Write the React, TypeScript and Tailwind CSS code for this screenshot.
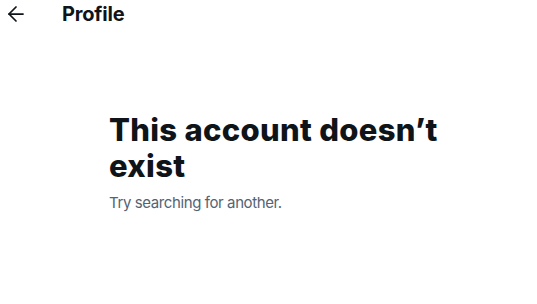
import { ArrowLeft } from "lucide-react";

export default function App() {
  return (
    <div className="w-[537px] h-[304px] bg-white text-[#0f1419] font-['Inter',sans-serif] overflow-hidden">
      <div className="h-[27px] flex items-center">
        <div className="w-[62px] pl-[4px] flex items-center">
          <ArrowLeft size={24} strokeWidth={1.75} />
        </div>
        <h2 className="text-[20px] font-bold leading-[24px] tracking-[-0.2px]">Profile</h2>
      </div>
      <div className="pt-[85px] pl-[109px] pr-[80px]">
        <h1 className="text-[31px] font-extrabold leading-[36px] tracking-[0.3px]">
          This account doesn’t exist
        </h1>
        <p className="mt-[9px] text-[15px] leading-[20px] tracking-[-0.4px] text-[#536471]">
          Try searching for another.
        </p>
      </div>
    </div>
  );
}
